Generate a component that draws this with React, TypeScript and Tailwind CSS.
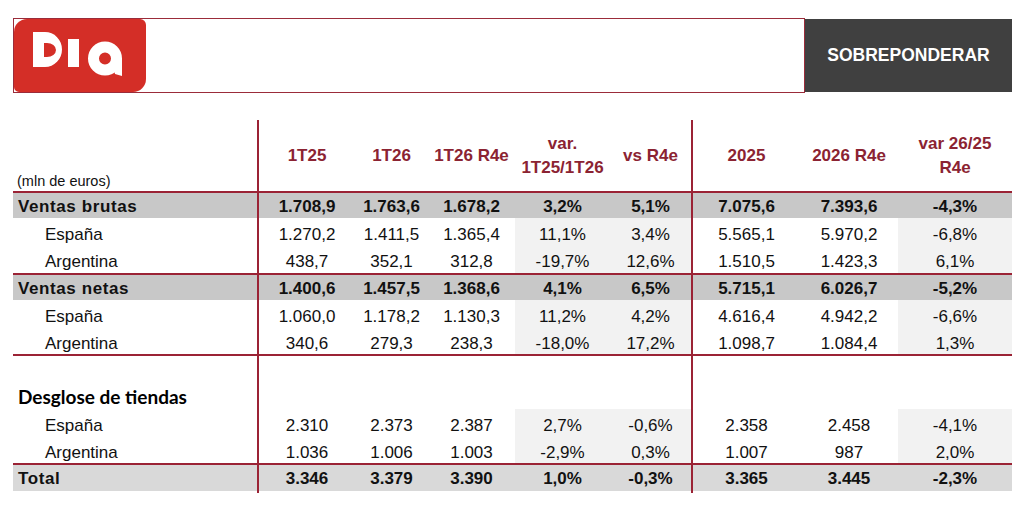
import React from "react";

const RED = "border-[#9b2335]";
const cols = "grid w-[999px] grid-cols-[244px_98px_73px_87px_95px_81px_109px_98px_114px]";

type Kind = "bold" | "sub" | "blank" | "section" | "total";

type Row = { kind: Kind; label: string; values: string[]; h: string };

const rows: Row[] = [
  { kind: "bold", label: "Ventas brutas", h: "h-[25px]", values: ["1.708,9", "1.763,6", "1.678,2", "3,2%", "5,1%", "7.075,6", "7.393,6", "-4,3%"] },
  { kind: "sub", label: "España", h: "h-[28px]", values: ["1.270,2", "1.411,5", "1.365,4", "11,1%", "3,4%", "5.565,1", "5.970,2", "-6,8%"] },
  { kind: "sub", label: "Argentina", h: "h-[27px]", values: ["438,7", "352,1", "312,8", "-19,7%", "12,6%", "1.510,5", "1.423,3", "6,1%"] },
  { kind: "bold", label: "Ventas netas", h: "h-[25px]", values: ["1.400,6", "1.457,5", "1.368,6", "4,1%", "6,5%", "5.715,1", "6.026,7", "-5,2%"] },
  { kind: "sub", label: "España", h: "h-[28px]", values: ["1.060,0", "1.178,2", "1.130,3", "11,2%", "4,2%", "4.616,4", "4.942,2", "-6,6%"] },
  { kind: "sub", label: "Argentina", h: "h-[26px]", values: ["340,6", "279,3", "238,3", "-18,0%", "17,2%", "1.098,7", "1.084,4", "1,3%"] },
  { kind: "blank", label: "", h: "h-[26px]", values: ["", "", "", "", "", "", "", ""] },
  { kind: "section", label: "Desglose de tiendas", h: "h-[27px]", values: ["", "", "", "", "", "", "", ""] },
  { kind: "sub", label: "España", h: "h-[28px]", values: ["2.310", "2.373", "2.387", "2,7%", "-0,6%", "2.358", "2.458", "-4,1%"] },
  { kind: "sub", label: "Argentina", h: "h-[26px]", values: ["1.036", "1.006", "1.003", "-2,9%", "0,3%", "1.007", "987", "2,0%"] },
  { kind: "total", label: "Total", h: "h-[26px]", values: ["3.346", "3.379", "3.390", "1,0%", "-0,3%", "3.365", "3.445", "-2,3%"] },
];

// rows that sit directly above a red rule
const ruleAfter = new Set([2, 5, 9]);

const divider = (i: number) => (i === 0 || i === 5 ? `border-l-2 ${RED}` : "");

const padTop: Record<Kind, string> = {
  bold: "pt-[3px]",
  sub: "pt-[5px]",
  blank: "",
  section: "pt-[3px]",
  total: "pt-[1px]",
};

const DiaLogo = () => (
  <div className="w-[132px] h-[73px] bg-[#d42e27] rounded-tl-[13px] rounded-tr-[6px] rounded-bl-[5px] rounded-br-[13px]">
    <svg width="132" height="73" viewBox="0 0 132 73">
      <path
        fillRule="evenodd"
        fill="#fff"
        d="M19 13 H31 A17 17.5 0 0 1 31 48 H19 Z M30 24 H33 A9 7 0 0 1 33 38 H30 Z"
      />
      <rect x="54" y="20" width="11" height="28" fill="#fff" />
      <circle cx="91" cy="39.5" r="11.5" fill="none" stroke="#fff" strokeWidth="11" />
      <path d="M97 39.5 H108 V57 L101 55 Z" fill="#fff" />
    </svg>
  </div>
);

const HeaderCell = ({ lines, i }: { lines: string[]; i: number }) => (
  <div className={`flex flex-col items-center justify-center text-center font-bold text-[17px] leading-[24px] text-[#8b2332] ${divider(i)}`}>
    {lines.map((l) => (
      <span key={l}>{l}</span>
    ))}
  </div>
);

export default function App() {
  const headers = [["1T25"], ["1T26"], ["1T26 R4e"], ["var.", "1T25/1T26"], ["vs R4e"], ["2025"], ["2026 R4e"], ["var 26/25", "R4e"]];

  return (
    <div className="w-[1024px] h-[507px] bg-white font-['Liberation_Sans',Arial,sans-serif] text-[#111]">
      {/* Header */}
      <div className="flex pt-[18px] pl-[13px]">
        <div className="w-[792px] h-[75px] border-[1.5px] border-[#9b2c3a]">
          <DiaLogo />
        </div>
        <div className="w-[207px] h-[73px] mt-[1px] bg-[#404040] flex items-center justify-center text-white font-bold text-[17.5px]">
          SOBREPONDERAR
        </div>
      </div>

      {/* Table */}
      <div className="pl-[13px] pt-[27px]">
        <div className={`${cols} h-[71px]`}>
          <div className="flex items-end pl-[4px] text-[14.5px] leading-[20px]">(mln de euros)</div>
          {headers.map((h, i) => (
            <HeaderCell key={i} lines={h} i={i} />
          ))}
        </div>
        <div className={`w-[999px] border-t-2 ${RED}`} />

        {rows.map((r, ri) => {
          const strong = r.kind === "bold" || r.kind === "total";
          const rowBg = r.kind === "bold" ? "bg-[#c8c8c8]" : r.kind === "total" ? "bg-[#d9d9d9]" : "";
          return (
            <React.Fragment key={ri}>
              <div className={`${cols} ${r.h} ${rowBg} text-[17px] leading-[20px] ${strong ? "font-bold" : ""}`}>
                <div
                  className={`flex items-center ${padTop[r.kind]} ${r.kind === "sub" ? "pl-[32px]" : "pl-[5px]"} ${
                    strong ? "tracking-[0.6px]" : ""
                  } ${r.kind === "section" ? "font-['Lato',sans-serif] font-bold text-[19px] text-black" : ""}`}
                >
                  {r.label}
                </div>
                {r.values.map((v, i) => (
                  <div
                    key={i}
                    className={`flex items-center justify-center ${padTop[r.kind]} ${divider(i)} ${
                      r.kind === "sub" && (i === 3 || i === 4 || i === 7) ? "bg-[#f2f2f2]" : ""
                    }`}
                  >
                    {v}
                  </div>
                ))}
              </div>
              {ruleAfter.has(ri) && <div className={`w-[999px] border-t-2 ${RED}`} />}
            </React.Fragment>
          );
        })}
        <div className={`${cols} h-[2px]`}>
          {[...Array(9)].map((_, i) => (
            <div key={i} className={i === 1 || i === 6 ? `border-l-2 ${RED}` : ""} />
          ))}
        </div>
      </div>
    </div>
  );
}
